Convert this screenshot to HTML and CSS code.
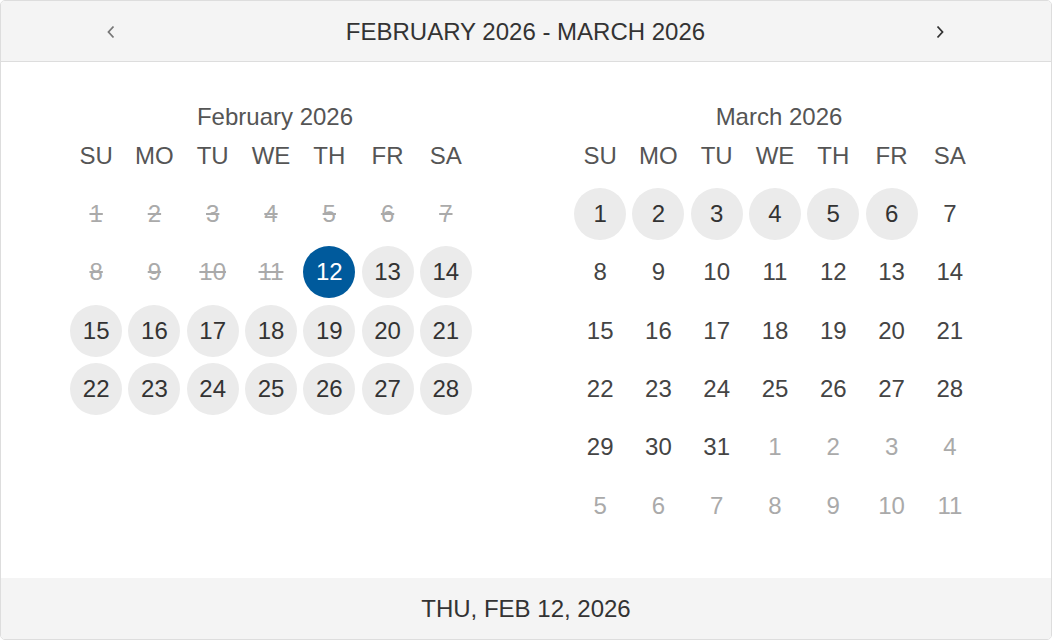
FILE: index.html
```html
<!DOCTYPE html>
<html lang="en">
<head>
  <meta charset="UTF-8">
  <meta name="viewport" content="width=device-width, initial-scale=1.0">
  <title>Date Picker</title>
  <link rel="stylesheet" href="styles.css">
</head>
<body>
<div class="picker">
  <div class="picker-head">
    <button class="nav prev" aria-label="Previous month">
      <svg width="10" height="14" viewBox="0 0 10 14"><polyline points="7.5,1.5 2.5,7 7.5,12.5" fill="none" stroke="#777" stroke-width="1.8"/></svg>
    </button>
    <span class="range">FEBRUARY 2026 - MARCH 2026</span>
    <button class="nav next" aria-label="Next month">
      <svg width="10" height="14" viewBox="0 0 10 14"><polyline points="2.5,1.5 7.5,7 2.5,12.5" fill="none" stroke="#333" stroke-width="1.8"/></svg>
    </button>
  </div>

  <div class="months">
    <div class="month">
      <div class="month-title">February 2026</div>
      <div class="weekdays"><span>SU</span><span>MO</span><span>TU</span><span>WE</span><span>TH</span><span>FR</span><span>SA</span></div>
      <div class="days" id="feb"></div>
    </div>
    <div class="month">
      <div class="month-title">March 2026</div>
      <div class="weekdays"><span>SU</span><span>MO</span><span>TU</span><span>WE</span><span>TH</span><span>FR</span><span>SA</span></div>
      <div class="days" id="mar"></div>
    </div>
  </div>

  <div class="picker-foot">THU, FEB 12, 2026</div>
</div>

<script>
// build a 6 week grid; kinds: d = disabled, a = available, s = selected, n = plain, o = other month
function fill(id, cells) {
  let html = '';
  cells.forEach(c => {
    html += `<span class="day ${c[1]}"><span>${c[0]}</span></span>`;
  });
  document.getElementById(id).innerHTML = html;
}

const feb = [];
for (let i = 1; i <= 28; i++) {
  let k = 'a';
  if (i < 12) k = 'd';
  if (i === 12) k = 's';
  feb.push([i, k]);
}
fill('feb', feb);

const mar = [];
for (let i = 1; i <= 31; i++) mar.push([i, i <= 6 ? 'a' : 'n']);
for (let i = 1; i <= 11; i++) mar.push([i, 'o']);
fill('mar', mar);
</script>
</body>
</html>
```

FILE: styles.css
```css
body {
  margin: 0;
  background: #fff;
  font-family: "Liberation Sans", Arial, sans-serif;
  color: #333;
}

.picker {
  width: 1052px;
  height: 640px;
  box-sizing: border-box;
  border: 1px solid #ddd;
  border-radius: 5px;
  overflow: hidden;
  display: flex;
  flex-direction: column;
}

.picker-head {
  height: 59px;
  flex: none;
  background: #f4f4f4;
  border-bottom: 1px solid #ddd;
  display: flex;
  align-items: center;
  justify-content: space-between;
  padding: 1px 101px 0 100px;
  box-sizing: content-box;
  font-size: 24px;
  color: #333;
}

.nav {
  width: 20px;
  height: 30px;
  padding: 0;
  border: none;
  background: none;
  display: flex;
  align-items: center;
  justify-content: center;
}

.months {
  flex: 1;
  display: flex;
  gap: 96px;
  padding: 36px 0 0 66px;
}

.month {
  width: 408px;
}

.month-title {
  text-align: center;
  font-size: 24px;
  line-height: 38px;
  color: #555;
  padding-left: 8px;
}

.weekdays {
  display: grid;
  grid-template-columns: repeat(7, 1fr);
  font-size: 24px;
  line-height: 40px;
  color: #555;
  text-align: center;
}

.days {
  margin-top: 9px;
  display: grid;
  grid-template-columns: repeat(7, 1fr);
  grid-auto-rows: 58.33px;
  font-size: 24px;
}

.day {
  display: flex;
  align-items: center;
  justify-content: center;
}

.day span {
  width: 52px;
  height: 52px;
  border-radius: 50%;
  display: flex;
  align-items: center;
  justify-content: center;
}

.day.d span {
  color: #aaa;
  text-decoration: line-through;
}

.day.a span {
  background: #ebebeb;
  color: #333;
}

.day.s span {
  background: #005a9c;
  color: #fff;
}

.day.n span {
  color: #444;
}

.day.o span {
  color: #aaa;
}

.picker-foot {
  height: 61px;
  flex: none;
  background: #f4f4f4;
  display: flex;
  align-items: center;
  justify-content: center;
  font-size: 24px;
  color: #333;
}
```
